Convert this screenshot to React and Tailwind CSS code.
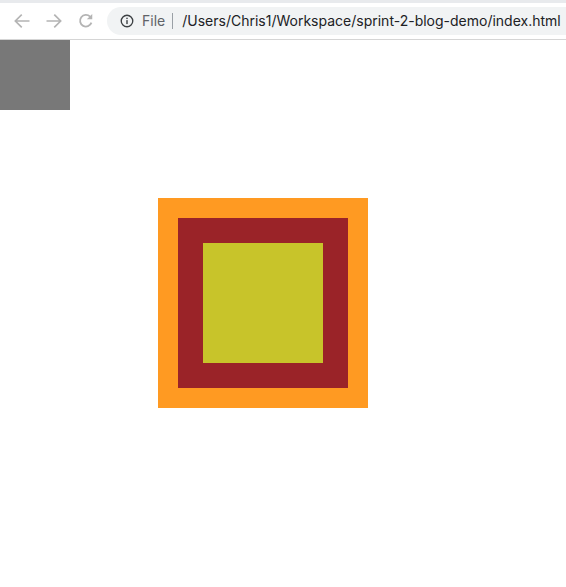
import React from "react";

export default function App() {
  return (
    <div className="w-[566px] h-[587px] bg-white overflow-hidden" style={{ fontFamily: "Inter, 'Noto Sans', sans-serif" }}>
      <div className="h-[3px] bg-[#e8eaed]" />
      <div className="h-[37px] flex items-center bg-white border-b border-[#d5d5d5]">
        <div className="flex items-center pl-[12px] gap-[12px]">
          <svg width="20" height="20" viewBox="0 0 24 24" fill="none" stroke="#b4b4b4" strokeWidth="2" strokeLinecap="square">
            <path d="M20 12H5M11 5l-7 7 7 7" />
          </svg>
          <svg width="20" height="20" viewBox="0 0 24 24" fill="none" stroke="#b4b4b4" strokeWidth="2" strokeLinecap="square">
            <path d="M4 12h15M13 5l7 7-7 7" />
          </svg>
          <svg width="20" height="20" viewBox="0 0 24 24" fill="none" stroke="#b4b4b4" strokeWidth="2.2">
            <path d="M18.5 14a7 7 0 1 1-1.6-7.2" />
            <path d="M19.5 3.5v6.5H13z" fill="#b4b4b4" stroke="none" />
          </svg>
        </div>
        <div className="ml-[11px] flex-1 h-[28px] rounded-l-full bg-[#f1f3f4] flex items-center pl-[13px]">
          <svg width="14" height="14" viewBox="0 0 16 16" fill="none">
            <circle cx="8" cy="8" r="6.6" stroke="#3c4043" strokeWidth="1.5" />
            <rect x="7.2" y="7" width="1.6" height="4.5" fill="#3c4043" />
            <rect x="7.2" y="4.2" width="1.6" height="1.6" fill="#3c4043" />
          </svg>
          <span className="ml-[8px] text-[14px] text-[#5f6368] leading-none">File</span>
          <span className="ml-[7px] w-px h-[16px] bg-[#9aa0a6]" />
          <span className="ml-[9px] text-[14px] text-[#202124] leading-none">/Users/Chris1/Workspace/sprint-2-blog-demo/index.html</span>
        </div>
      </div>
      <div>
        <div className="w-[70px] h-[70px] bg-[#787878]" />
        <div className="mt-[88px] ml-[158px] w-[210px] h-[210px] bg-[#ff9a22] p-[20px]">
          <div className="w-[170px] h-[170px] bg-[#9a2328] p-[25px]">
            <div className="w-[120px] h-[120px] bg-[#c8c42a]" />
          </div>
        </div>
      </div>
    </div>
  );
}
